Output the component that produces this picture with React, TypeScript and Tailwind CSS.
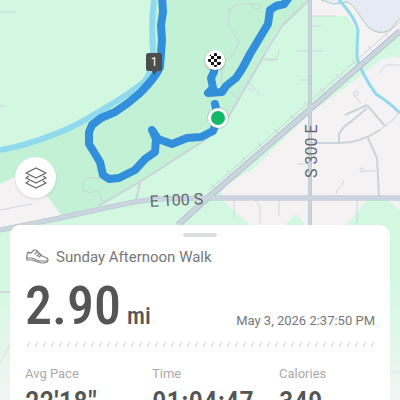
import React from "react";

const stats = [
  { label: "Avg Pace", value: `22'18"` },
  { label: "Time", value: "01:04:47" },
  { label: "Calories", value: "349" },
];

function RouteMap() {
  return (
    <svg
      className="absolute inset-0 h-full w-full font-['Roboto',sans-serif]"
      viewBox="0 0 400 400"
      preserveAspectRatio="xMidYMin slice"
      role="img"
      aria-label="Map of the walk"
    >
      <defs>
        <linearGradient id="fade" x1="0" y1="0" x2="0" y2="1">
          <stop offset="0" stopColor="#f2f4f3" stopOpacity="0" />
          <stop offset="1" stopColor="#f2f4f3" stopOpacity="1" />
        </linearGradient>
        <clipPath id="flagClip">
          <circle cx="215" cy="60" r="7" />
        </clipPath>
      </defs>
      <rect width="400" height="400" fill="#d3f8e2" />
      {/* park */}
      <path d="M155 0V50Q155 72 144 82Q128 95 105 108Q75 127 55 134Q25 146 0 150V184L14 178L48 197L62 216L100 206L138 184L205 140L230 116L262 57Q268 40 280 27L309 0Z" fill="#c3f1d5" />
      {/* built-up land */}
      <path d="M0 184L14 177L48 197L62 216L0 231Z" fill="#f4f2f3" />
      <path d="M311 0H400V32L357 68L358 32L347 16H311Z" fill="#f4f2f3" />
      <path d="M400 58Q388 55 378 62L355 80L311 113L280 142L252 170L222 187V200L250 225H285L296 214L305 225H346L367 200H387L400 210Z" fill="#f4f2f3" />
      <path d="M340 0H400V17L390 29Q378 36 370 28L354 6Q350 1 340 3L322 0Z" fill="#e5eaf5" />
      <path d="M321 0L334 4L345 2Q351 2 356 10L368 27Q378 36 390 30L400 18" fill="none" stroke="#a8c9bd" strokeWidth="1" />
      {/* water */}
      <g fill="none" stroke="#90daee">
        <path d="M154 0Q151 22 153 52Q153 70 145 81Q128 95 105 108Q75 127 55 134Q25 146 0 150" strokeWidth="6" />
        <path d="M339 0Q355 17 358 30Q357 45 357 58Q362 75 376 94Q390 103 400 113" strokeWidth="3" />
      </g>
      {/* minor roads and paths */}
      <g fill="none" stroke="#c8d2dc" strokeWidth="1" opacity=".8">
        <path d="M0 12L16 12M0 106H5M0 210L32 204M262 60L276 60Q279 53 279 49M264 59H276M296 51H323M312 26H321M300 80H310M312 16H336M247 80L260 95M248 88L254 91M228 90L238 99M298 164H310M364 171H376M234 200V217M255 200L260 206V223M279 200V216M357 200V223M336 194Q336 190 342 185L344 180M380 73Q382 66 388 65H400" />
        <path d="M230 10Q233 3 247 4Q260 2 261 7Q255 11 250 4M230 8L228 24L239 42L233 55L223 63L221 84" />
        <path d="M83 184L86 178H100M98 190L103 203M84 184L83 190L90 193L98 190" />
        <path d="M361 104L354 95Q352 92 356 91Q360 92 358 95H354" />
        <circle cx="362" cy="170" r="2" />
      </g>
      <g fill="none" stroke="#cbd4dc" strokeWidth="2">
        <path d="M309 0L282 26Q269 45 258 66L229 116L205 140L138 183L98 206M140 183L136 201" />
        <path d="M310 143H340Q360 143 380 130M339 143V134Q344 125 352 121L367 108M367 105L385 126M368 138L377 158L379 197M345 115L367 105" />
        <path d="M380 130L395 118L400 110" strokeWidth="1" />
      </g>
      {/* railway */}
      <g fill="none" stroke="#cdd2d4" strokeWidth="1">
        <path d="M400 22L208 191" />
        <path d="M384 32L389 37M368 46L373 51M352 60L357 65M336 74L341 79M320 88L325 93M304 102L309 107M290 115L295 120M274 129L279 134M258 143L263 148M242 157L247 162M227 170L232 175M211 184L216 189" />
      </g>
      {/* main roads */}
      <g fill="none" stroke="#b6c0cb">
        <path d="M400 31L201 204L178 225" strokeWidth="6" />
        <path d="M0 230L60 218L110 207Q140 200 160 199L200 198H400" strokeWidth="5" />
        <path d="M310 0V225" strokeWidth="4" />
      </g>
      <g fill="none" stroke="#cbd5df">
        <path d="M310 0V225" strokeWidth="3" />
        <path d="M400 31L201 204L178 225" strokeWidth="4" />
        <path d="M0 230L60 218L110 207Q140 200 160 199L200 198H400" strokeWidth="4" />
      </g>
      <path d="M0 364Q6 350 12 342M0 292H10M390 372H400" stroke="#ccd5da" fill="none" strokeWidth="2" />
      <rect y="280" width="400" height="120" fill="url(#fade)" />

      {/* recorded route */}
      <g fill="none" stroke="#318fdc" strokeWidth="8" strokeLinejoin="round" strokeLinecap="round">
        <path d="M162 -4L163 12L161 25L162 40L160 67Q155 78 140 93L128 103L115 112L101 118L92 125L89 132V144L100 162L103 175L109 179L119 178L135 170L145 159L155 152L156 139L152 130L158 139L172 144L187 138L201 137L213 131L218 118L215 104" />
        <path d="M215 60L214 72L211 78L213 88L208 93L222 92L226 86L236 78L242 69L250 54L262 34L268 24L270 10L276 6L284 4L290 -4" />
      </g>

      {/* mile marker */}
      <path d="M149 53H160Q162 53 162 55V69Q162 71 160 71H157L154 75L152 71H149Q146 71 146 69V55Q146 53 149 53Z" fill="#4c4d4d" />
      <text x="154" y="66" textAnchor="middle" fontSize="12" fill="#fff">1</text>

      {/* finish */}
      <circle cx="215" cy="61" r="11" fill="#64748b" opacity=".25" />
      <circle cx="215" cy="60" r="10" fill="#fff" />
      <g clipPath="url(#flagClip)" fill="#151515">
        <path d="M208 53h3v3h-3zM214 53h3v3h-3zM211 56h3v3h-3zM217 56h4v3h-4zM208 59h3v3h-3zM214 59h3v3h-3zM211 62h3v3h-3zM217 62h4v3h-4zM214 65h3v3h-3z" />
      </g>
      {/* start */}
      <circle cx="218" cy="118" r="11" fill="#64748b" opacity=".2" />
      <circle cx="218" cy="118" r="10" fill="#fff" />
      <circle cx="218" cy="118" r="7" fill="#10b868" />

      <g fontSize="16" fill="#62686d" stroke="#fff" strokeOpacity=".3" strokeWidth="1" paintOrder="stroke">
        <text x="150" y="207" transform="rotate(-3 150 207)">E 100 S</text>
        <text x="317" y="178" transform="rotate(-90 317 178)">S 300 E</text>
      </g>
    </svg>
  );
}

function LayersIcon() {
  return (
    <svg className="size-6" viewBox="0 0 24 24" fill="none" stroke="#666" strokeWidth="1.300" strokeLinejoin="round" aria-hidden="true">
      <path d="M12 2L22 7L12 12L2 7ZM5 10L2 12L12 17L22 12L19 10M5 15L2 17L12 22L22 17L19 15" />
    </svg>
  );
}

function ShoeIcon() {
  return (
    <svg className="h-4 w-6" viewBox="0 0 24 16" fill="none" stroke="#808080" strokeWidth="1.200" strokeLinejoin="round" strokeLinecap="round" aria-hidden="true">
      <path d="M3 3Q5 5 7 3Q8 2 9 1L11 1L17 7L22 9Q24 11 22 13Q18 15 13 13L7 11L2 11Q1 8 3 3ZM2 9L7 9L14 12L22 12M10 5L12 3M12 7L14 5M14 8L16 6" />
    </svg>
  );
}

export default function App() {
  return (
    <main className="relative h-screen overflow-hidden bg-[#d3f8e2] font-['Roboto',sans-serif]">
      <RouteMap />
      <button
        type="button"
        aria-label="Map layers"
        className="absolute top-[157px] left-[15px] flex size-[41px] items-center justify-center rounded-full bg-[#fdfefd] shadow-sm"
      >
        <LayersIcon />
      </button>
      <section className="relative mx-[10px] mt-[225px] rounded-t-[10px] bg-white px-[15px] pt-2 pb-6">
        <div className="mx-auto h-1 w-[34px] rounded-full bg-[#dddede]" />
        <div className="mt-[10px] flex items-center gap-[7px] text-[#777]">
          <ShoeIcon />
          <h1 className="text-[15px] leading-5">Sunday Afternoon Walk</h1>
        </div>
        <div className="mt-3 flex items-end justify-between">
          <p className="flex items-baseline gap-1.5 font-['Roboto_Condensed','Roboto',sans-serif] font-medium text-[#555]">
            <span className="text-[54px] leading-[54px]">2.90</span>
            <span className="text-[24px] leading-6">mi</span>
          </p>
          <time className="pb-0.5 text-[13px] leading-5 text-[#777]">May 3, 2026 2:37:50 PM</time>
        </div>
        <svg className="mt-2 h-[6px] w-full" aria-hidden="true">
          <defs>
            <pattern id="hatch" width="8" height="6" patternUnits="userSpaceOnUse">
              <path d="M2 6L5 1" stroke="#ccc" strokeWidth="1" />
            </pattern>
          </defs>
          <rect width="100%" height="6" fill="url(#hatch)" />
        </svg>
        <dl className="mt-[17px] grid grid-cols-[127px_127px_1fr]">
          {stats.map((s) => (
            <div key={s.label}>
              <dt className="text-[13px] leading-5 text-[#aaa]">{s.label}</dt>
              <dd className="mt-0.5 font-['Roboto_Condensed','Roboto',sans-serif] text-[29px] leading-8 font-medium text-[#555]">{s.value}</dd>
            </div>
          ))}
        </dl>
      </section>
    </main>
  );
}
